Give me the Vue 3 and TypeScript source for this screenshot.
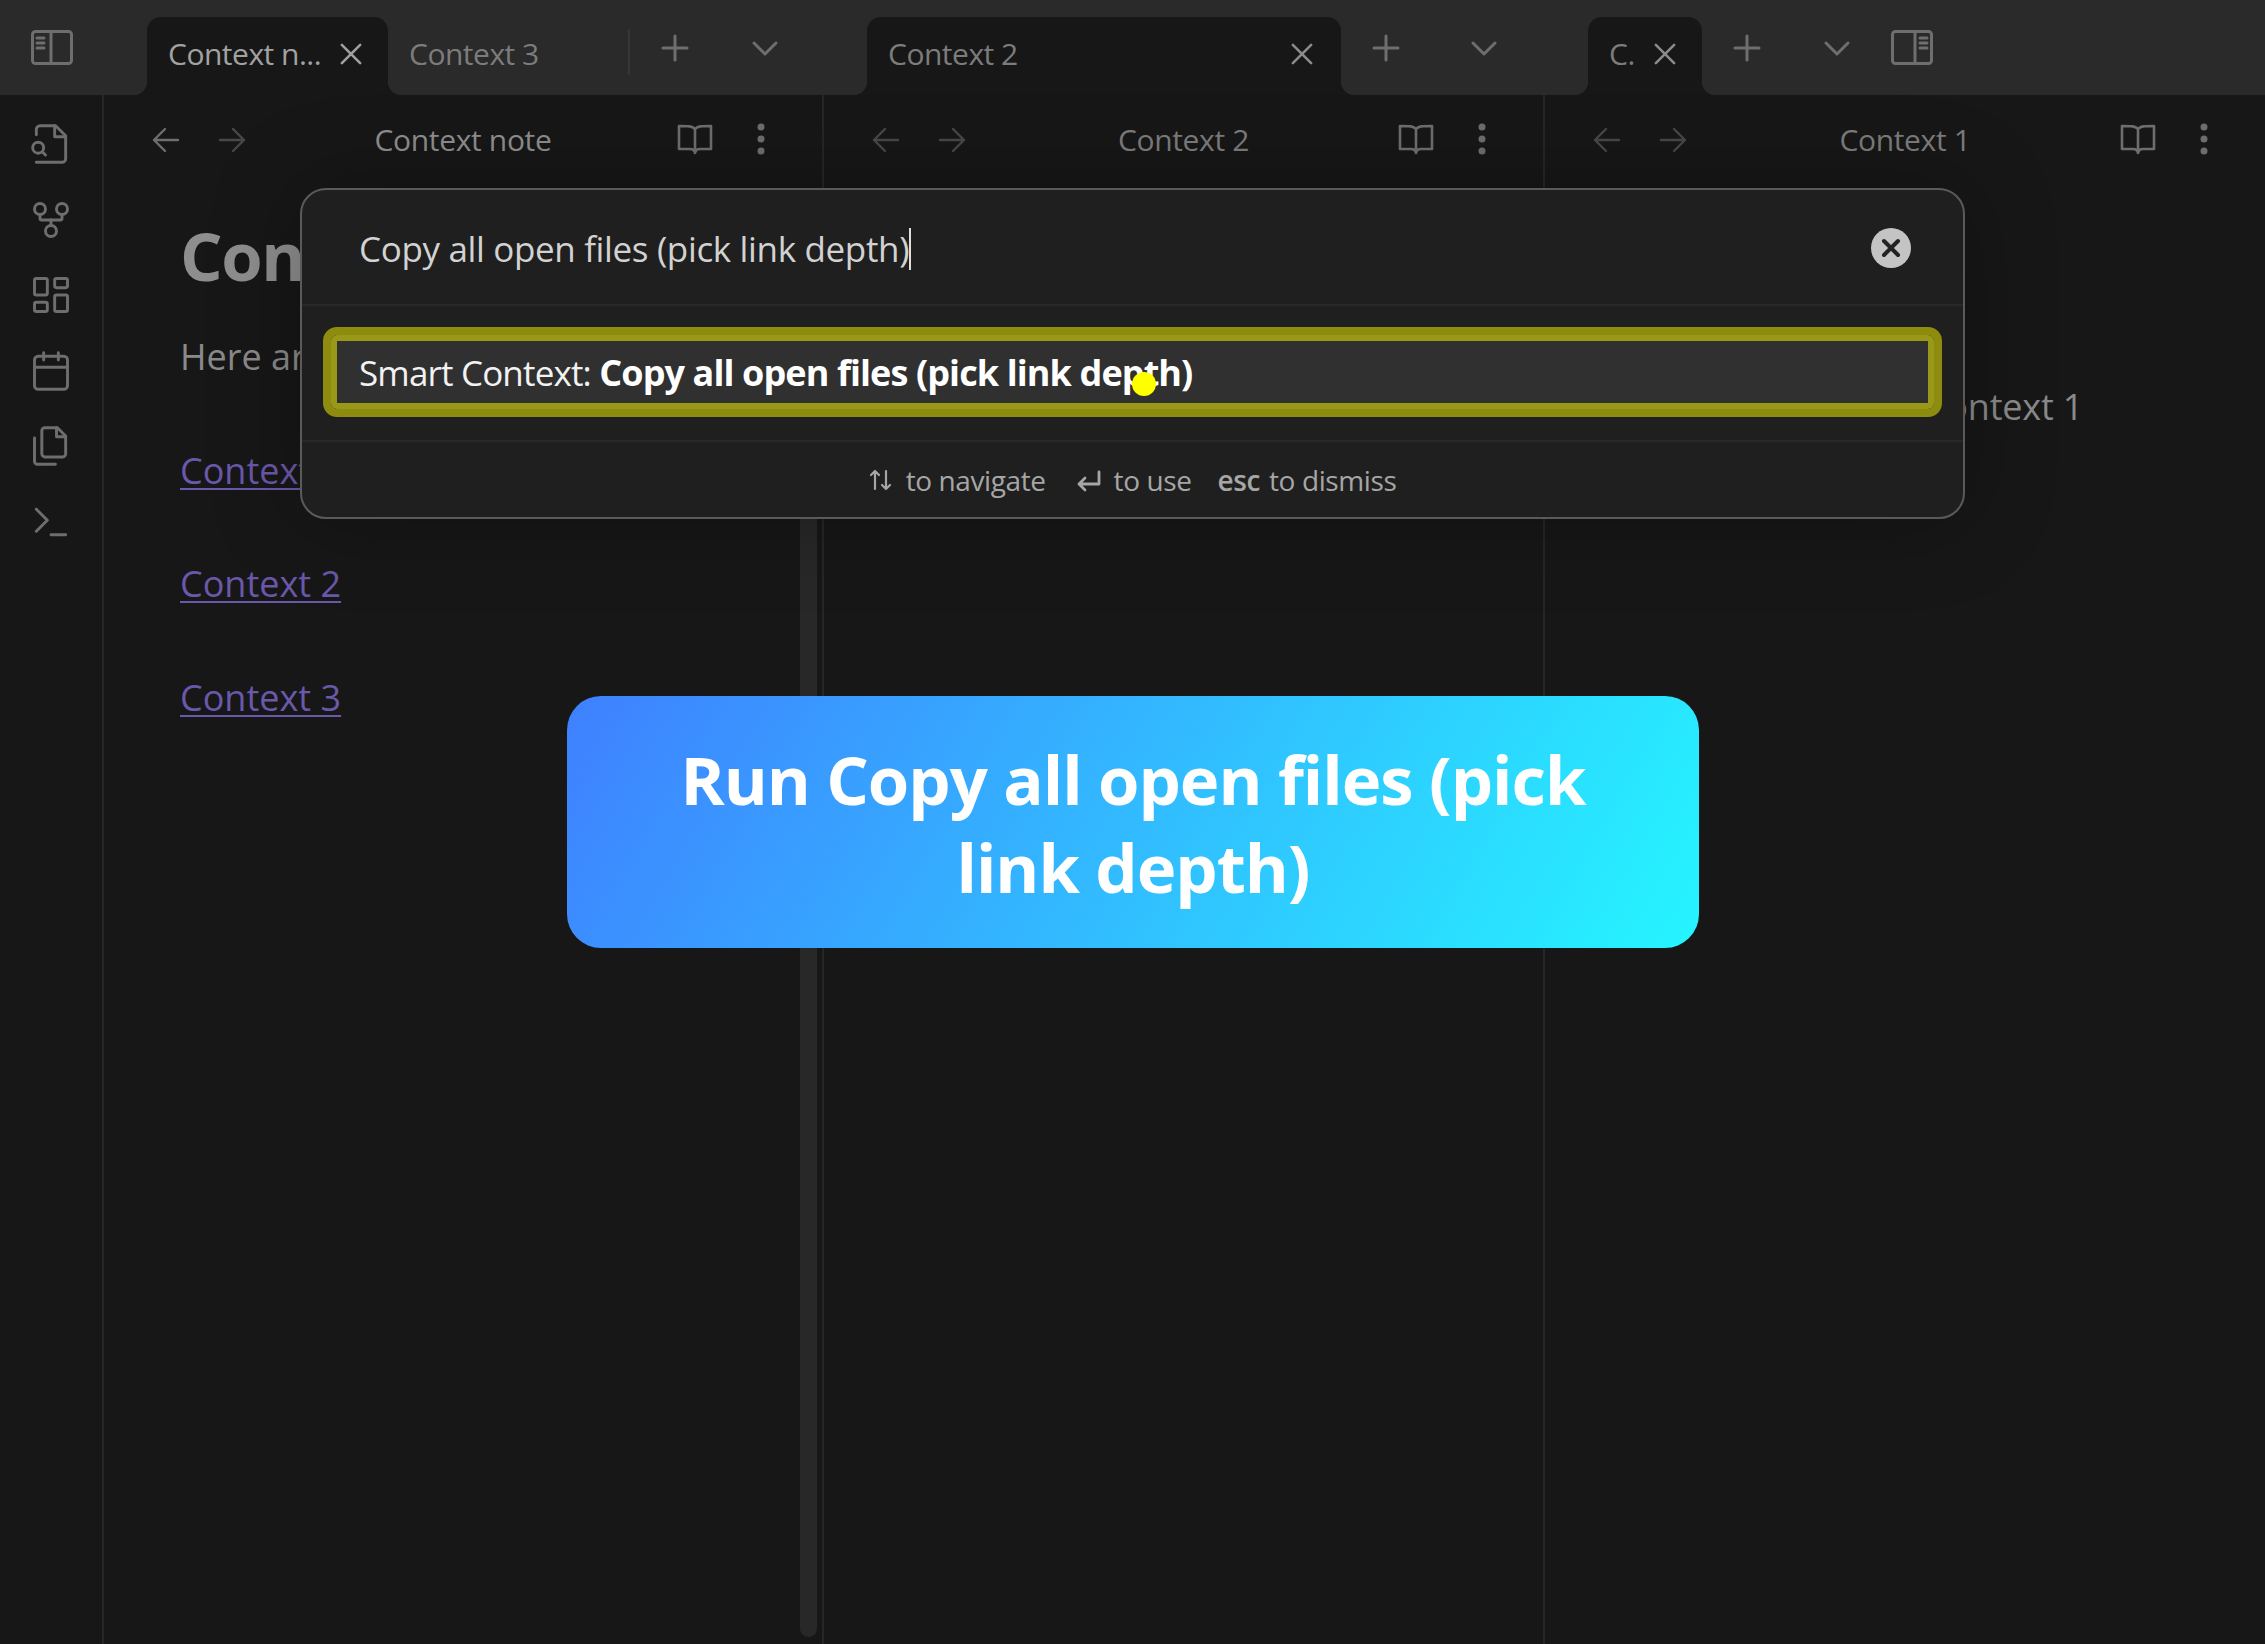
<script setup lang="ts">
interface Pane {
  title: string
  tabs: { label: string; active: boolean; width: number; close: boolean; sep?: boolean }[]
  backLit: boolean
}
const panes: Pane[] = [
  {
    title: 'Context note',
    backLit: true,
    tabs: [
      { label: 'Context n...', active: true, width: 241, close: true },
      { label: 'Context 3', active: false, width: 242, close: false, sep: true }
    ]
  },
  {
    title: 'Context 2',
    backLit: false,
    tabs: [{ label: 'Context 2', active: true, width: 474, close: true }]
  },
  {
    title: 'Context 1',
    backLit: false,
    tabs: [{ label: 'C.', active: true, width: 114, close: true }]
  }
]
const links: string[] = ['Context 1', 'Context 2', 'Context 3']
</script>

<template>
  <div class="app">
    <div class="corner">
      <svg class="toggle" viewBox="0 0 42 35" fill="none" stroke="currentColor" stroke-width="3" stroke-linecap="round">
        <rect x="1.5" y="1.5" width="39" height="32" rx="3" />
        <path d="M20 2v31M6 8h7M6 13h7M6 18h7" />
      </svg>
    </div>
    <div v-for="(pane, i) in panes" :key="'t' + i" class="tabbar" :class="'bar-' + i">
      <div
        v-for="tab in pane.tabs"
        :key="tab.label"
        class="tab"
        :class="{ active: tab.active, sep: tab.sep }"
        :style="{ width: tab.width + 'px' }"
      >
        <span class="tab-label">{{ tab.label }}</span>
        <svg v-if="tab.close" class="tab-x" viewBox="0 0 24 24" fill="none" stroke="currentColor" stroke-width="2.8" stroke-linecap="round">
          <path d="M2 2l20 20M22 2L2 22" />
        </svg>
      </div>
      <div class="act">
        <svg class="plus" viewBox="0 0 28 28" fill="none" stroke="currentColor" stroke-width="3" stroke-linecap="round">
          <path d="M14 2v24M2 14h24" />
        </svg>
      </div>
      <div class="act act-chev">
        <svg class="chev" viewBox="0 0 26 15" fill="none" stroke="currentColor" stroke-width="3" stroke-linecap="round" stroke-linejoin="round">
          <path d="M2 2l11 11L24 2" />
        </svg>
      </div>
      <svg v-if="i === 2" class="toggle right" viewBox="0 0 42 35" fill="none" stroke="currentColor" stroke-width="3" stroke-linecap="round">
        <rect x="1.5" y="1.5" width="39" height="32" rx="3" />
        <path d="M24 2v31M29 8h7M29 13h7M29 18h7" />
      </svg>
    </div>

    <aside class="ribbon">
      <svg viewBox="0 0 24 24"><path d="M4 22h14a2 2 0 0 0 2-2V7.5L14.5 2H6a2 2 0 0 0-2 2v3" /><path d="M14 2v6h6" /><path d="M5 17a3 3 0 1 0 0-6 3 3 0 0 0 0 6z" /><path d="m9 18-1.5-1.5" /></svg>
      <svg viewBox="0 0 24 24"><circle cx="12" cy="18" r="3" /><circle cx="6" cy="6" r="3" /><circle cx="18" cy="6" r="3" /><path d="M18 9v2c0 .6-.4 1-1 1H7c-.6 0-1-.4-1-1V9" /><path d="M12 12v3" /></svg>
      <svg viewBox="0 0 24 24"><rect width="7" height="9" x="3" y="3" rx="1" /><rect width="7" height="5" x="14" y="3" rx="1" /><rect width="7" height="9" x="14" y="12" rx="1" /><rect width="7" height="5" x="3" y="16" rx="1" /></svg>
      <svg viewBox="0 0 24 24"><path d="M8 2v4M16 2v4" /><rect width="18" height="18" x="3" y="4" rx="2" /><path d="M3 10h18" /></svg>
      <svg viewBox="0 0 24 24"><path d="M15.5 2H8.6c-.4 0-.8.2-1.1.5-.3.3-.5.7-.5 1.1v12.8c0 .4.2.8.5 1.1.3.3.7.5 1.1.5h9.8c.4 0 .8-.2 1.1-.5.3-.3.5-.7.5-1.1V6.5L15.5 2z" /><path d="M3 7.6v12.8c0 .4.2.8.5 1.1.3.3.7.5 1.1.5h9.8" /><path d="M15 2v5h5" /></svg>
      <svg viewBox="0 0 24 24"><path d="M4 17l6-6-6-6" /><path d="M12 19h8" /></svg>
    </aside>

    <section v-for="(pane, i) in panes" :key="'p' + i" class="pane" :class="'pane-' + i">
      <header class="head">
        <div class="nav">
          <svg class="arrow" :class="{ lit: pane.backLit }" viewBox="0 0 28 26" fill="none" stroke="currentColor" stroke-width="2.4" stroke-linecap="round" stroke-linejoin="round">
            <path d="M26 13H2M13 2L2 13l11 11" />
          </svg>
          <svg class="arrow" viewBox="0 0 28 26" fill="none" stroke="currentColor" stroke-width="2.4" stroke-linecap="round" stroke-linejoin="round">
            <path d="M2 13h24M15 2l11 11-11 11" />
          </svg>
        </div>
        <div class="title">{{ pane.title }}</div>
        <div class="tools">
          <svg class="book" viewBox="0 0 36 31" fill="none" stroke="currentColor" stroke-width="2.6" stroke-linecap="round" stroke-linejoin="round">
            <path d="M18 5C15 2 12 2 2 2v23h11c2.500 0 4.500 1 5 4 .5-3 2.500-4 5-4h11V2C24 2 21 2 18 5zM18 5v23" />
          </svg>
          <svg class="dots" viewBox="0 0 8 32" fill="currentColor">
            <circle cx="4" cy="4" r="3.500" /><circle cx="4" cy="16" r="3.500" /><circle cx="4" cy="28" r="3.500" />
          </svg>
        </div>
      </header>
      <div class="doc">
        <template v-if="i === 0">
          <h1>Context note</h1>
          <p>Here are the notes:</p>
          <p v-for="l in links" :key="l"><a>{{ l }}</a></p>
        </template>
        <p v-else-if="i === 2" class="note">This is the note of Context 1</p>
      </div>
      <div v-if="i === 0" class="thumb"></div>
    </section>

    <div class="modal">
      <div class="query">
        <span class="query-text">Copy all open files (pick link depth)</span>
        <span class="clear">
          <svg viewBox="0 0 40 40" fill="none" stroke="#232323" stroke-width="4" stroke-linecap="round"><path d="M13 13l14 14M27 13L13 27" /></svg>
        </span>
      </div>
      <div class="results">
        <div class="hit">Smart Context: <b>Copy all open files (pick link depth)</b></div>
      </div>
      <div class="hints">
        <span class="hint">
          <svg class="hint-ic" viewBox="0 0 24 24" fill="none" stroke="currentColor" stroke-width="2.2" stroke-linecap="round" stroke-linejoin="round">
            <path d="M6 21V3M2 7l4-4 4 4M17 3v18M13 17l4 4 4-4" />
          </svg>
          to navigate
        </span>
        <span class="hint hint-use">
          <svg class="hint-ic" viewBox="0 0 24 24" fill="none" stroke="currentColor" stroke-width="2.800" stroke-linecap="round" stroke-linejoin="round">
            <path d="M22 4v12H2M8 10l-6 6 6 6" />
          </svg>
          to use
        </span>
        <span class="hint hint-esc"><b>esc</b> to dismiss</span>
      </div>
    </div>

    <div class="cursor"></div>
    <div class="banner">Run Copy all open files (pick link depth)</div>
  </div>
</template>

<style>
html, body { margin: 0; background: #171717; }
</style>

<style scoped>
.app {
  position: relative;
  width: 2265px;
  height: 1644px;
  overflow: hidden;
  display: grid;
  grid-template-columns: 104px 720px 721px 1fr;
  grid-template-rows: 95px 1fr;
  background: #171717;
  font-family: "Open Sans", "Noto Sans", sans-serif;
  color: #9a9a9a;
}
.corner, .tabbar { background: #2a2a2a; }
.corner { padding: 30px 0 0 31px; color: #6e6e6e; }
.toggle { width: 42px; height: 35px; display: block; color: #6e6e6e; }
.toggle.right { margin: 30px 0 0 9px; }
.tabbar { display: flex; padding-left: 43px; }
.tab {
  position: relative;
  box-sizing: border-box;
  height: 78px;
  margin-top: 17px;
  padding: 0 26px 0 21px;
  display: flex;
  align-items: center;
  justify-content: space-between;
  border-radius: 14px 14px 0 0;
  font-size: 30px;
  letter-spacing: -0.5px;
  color: #7c7c7c;
}
.tab-label { position: relative; top: -3px; white-space: nowrap; }
.tab.active { background: #171717; }
.tab.active::before, .tab.active::after {
  content: "";
  position: absolute;
  bottom: 0;
  width: 14px;
  height: 14px;
}
.tab.active::before { left: -14px; background: radial-gradient(circle at 0 0, transparent 14px, #171717 14.5px); }
.tab.active::after { right: -14px; background: radial-gradient(circle at 100% 0, transparent 14px, #171717 14.5px); }
.bar-0 .tab.active { color: #a2a2a2; }
.bar-0 .tab-x { color: #a0a0a0; }
.bar-1 .tab { padding-right: 28px; }
.bar-1 .act-chev { margin-left: 8px; }
.tab.sep::after {
  content: "";
  position: absolute;
  right: 0;
  top: 12px;
  height: 46px;
  width: 2px;
  background: #363636;
}
.tab-x { width: 22px; height: 22px; color: #8c8c8c; position: relative; top: -2px; flex: none; }
.act { width: 90px; height: 96px; display: flex; align-items: center; justify-content: center; color: #6e6e6e; flex: none; }
.plus { width: 28px; height: 28px; }
.chev { width: 26px; height: 15px; }

.ribbon {
  border-right: 2px solid #262626;
  box-sizing: border-box;
  padding-top: 27px;
  display: flex;
  flex-direction: column;
  align-items: center;
  gap: 31.600px;
}
.ribbon svg {
  width: 44px;
  height: 44px;
  fill: none;
  stroke: #6e6e6e;
  stroke-width: 1.600;
  stroke-linecap: round;
  stroke-linejoin: round;
}
.pane { position: relative; min-width: 0; box-sizing: border-box; }
.pane-0, .pane-1 { border-right: 2px solid #262626; }
.head {
  height: 88px;
  display: grid;
  grid-template-columns: 1fr auto 1fr;
  align-items: center;
  padding: 0 48px;
}
.nav { display: flex; gap: 38px; margin-top: 2px; }
.arrow { width: 28px; height: 26px; color: #484848; }
.arrow.lit { color: #6e6e6e; }
.title { font-size: 30px; letter-spacing: -0.35px; color: #7c7c7c; }
.pane-0 .title { color: #8e8e8e; }
.tools { display: flex; justify-content: flex-end; align-items: center; gap: 44px; color: #6e6e6e; margin-right: 9px; }
.book { width: 36px; height: 31px; }
.dots { width: 8px; height: 32px; }
.doc { padding: 35px 76px 0; }
.doc h1 {
  margin: 0 0 40px;
  font-size: 67px;
  line-height: 74px;
  font-weight: 700;
  letter-spacing: -1.5px;
  color: #8e8e8e;
  white-space: nowrap;
}
.doc p {
  margin: 0 0 63.500px;
  font-size: 36px;
  line-height: 50px;
  letter-spacing: 0;
  color: #8a8a8a;
  white-space: nowrap;
}
.doc a { color: #6a58ab; text-decoration: underline; text-underline-offset: 4px; text-decoration-thickness: 2px; }
.doc .note { margin-top: 164px; letter-spacing: -0.2px; }
.thumb {
  position: absolute;
  right: 5px;
  top: 95px;
  bottom: 7px;
  width: 17px;
  border-radius: 0 0 9px 9px;
  background: #282828;
}

.modal {
  position: absolute;
  left: 300px;
  top: 188px;
  width: 1665px;
  height: 331px;
  box-sizing: border-box;
  border: 2px solid #5a5a5a;
  border-radius: 26px;
  background: #1f1f1f;
  box-shadow: 0 0 90px rgba(0, 0, 0, 0.28);
  display: flex;
  flex-direction: column;
}
.query {
  height: 116px;
  box-sizing: border-box;
  flex: none;
  display: flex;
  align-items: center;
  justify-content: space-between;
  padding: 0 52px 0 57px;
  border-bottom: 2px solid #282828;
}
.query-text {
  font-size: 35px;
  letter-spacing: -0.35px;
  line-height: 42px;
  color: #d2d2d2;
  border-right: 2px solid #dedede;
  white-space: nowrap;
  position: relative;
  top: 2px;
}
.clear {
  width: 40px;
  height: 40px;
  border-radius: 50%;
  background: #c4c4c4;
  display: block;
  margin-top: 2px;
}
.clear svg { display: block; width: 40px; height: 40px; }
.results {
  height: 136px;
  box-sizing: border-box;
  flex: none;
  padding: 21px 21px 0;
  border-bottom: 2px solid #282828;
}
.hit {
  height: 90px;
  box-sizing: border-box;
  border: 8px solid #8e8c0e;
  border-radius: 14px;
  background: #303030;
  box-shadow: inset 0 0 0 6px #9a9818;
  padding: 7px 0 0 28px;
  font-size: 35px;
  line-height: 62px;
  letter-spacing: -0.83px;
  color: #f2f2f2;
  white-space: nowrap;
}
.hit b { font-size: 36px; font-weight: 700; color: #fff; letter-spacing: -0.9px; }
.hints {
  flex: 1;
  display: flex;
  align-items: center;
  justify-content: center;
  gap: 28px;
  font-size: 28px;
  letter-spacing: -0.4px;
  color: #a6a6a6;
}
.hint { display: flex; align-items: center; gap: 13px; white-space: nowrap; }
.hint-use { margin-left: 3px; }
.hint-esc { gap: 9px; margin-left: -2px; }
.hint b { font-weight: 600; color: #a6a6a6; }
.hint-ic { width: 24px; height: 24px; }
.cursor {
  position: absolute;
  left: 1132px;
  top: 372px;
  width: 24px;
  height: 24px;
  border-radius: 50%;
  background: #ffff00;
}
.banner {
  position: absolute;
  left: 567px;
  top: 696px;
  width: 1132px;
  height: 252px;
  box-sizing: border-box;
  padding: 39px 70px 0;
  border-radius: 34px;
  background: linear-gradient(120deg, #3f80ff 0%, #25f5ff 100%);
  color: #fff;
  font-size: 67px;
  line-height: 88px;
  font-weight: 700;
  letter-spacing: -1px;
  text-align: center;
}
</style>
